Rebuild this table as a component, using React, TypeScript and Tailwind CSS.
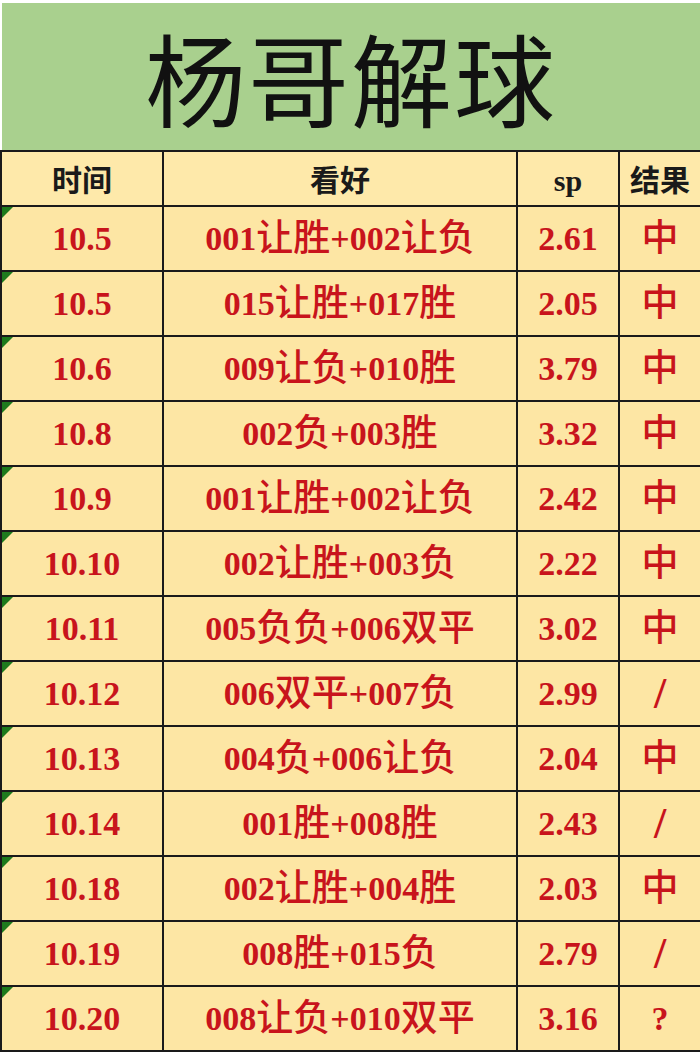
const rows = [
  ["10.5", "001让胜+002让负", "2.61", "中"],
  ["10.5", "015让胜+017胜", "2.05", "中"],
  ["10.6", "009让负+010胜", "3.79", "中"],
  ["10.8", "002负+003胜", "3.32", "中"],
  ["10.9", "001让胜+002让负", "2.42", "中"],
  ["10.10", "002让胜+003负", "2.22", "中"],
  ["10.11", "005负负+006双平", "3.02", "中"],
  ["10.12", "006双平+007负", "2.99", "/"],
  ["10.13", "004负+006让负", "2.04", "中"],
  ["10.14", "001胜+008胜", "2.43", "/"],
  ["10.18", "002让胜+004胜", "2.03", "中"],
  ["10.19", "008胜+015负", "2.79", "/"],
  ["10.20", "008让负+010双平", "3.16", "?"],
];

const serif = "font-['Liberation_Serif','Noto_Sans_CJK_SC',serif]";

// split text so the Chinese runs can be sized a bit larger than the digits
function Mixed({ text }: { text: string }) {
  if (text === "/")
    return (
      <span className="font-['Liberation_Serif',serif] text-[44px] font-bold">
        /
      </span>
    );
  const parts = text.match(/[\u4e00-\u9fff]+|[^\u4e00-\u9fff]+/g) || [];
  return (
    <>
      {parts.map((p, i) =>
        /[\u4e00-\u9fff]/.test(p) ? (
          <span key={i} className="text-[37px] font-medium">
            {p}
          </span>
        ) : (
          <span key={i}>{p}</span>
        )
      )}
    </>
  );
}

export default function App() {
  return (
    <div className="w-[700px] h-[1053px] overflow-hidden bg-white">
      <div className="ml-[2px] mt-[3px] h-[147px] bg-[#a9d08e] flex items-center justify-center">
        <h1 className="font-['Noto_Sans_CJK_SC',sans-serif] text-[101px] leading-none text-[#111] tracking-[2px]">
          杨哥解球
        </h1>
      </div>
      <div className="grid grid-cols-[162px_354px_102px_82px] border-t-2 border-l-2 border-[#1a1a1a]">
        {["时间", "看好", "sp", "结果"].map((h) => (
          <div
            key={h}
            className={`h-[55px] pt-[4px] border-r-2 border-b-2 border-[#1a1a1a] bg-[#fee9aa] flex items-center justify-center text-[30px] font-bold text-[#1a1a1a] ${serif}`}
          >
            {h}
          </div>
        ))}
        {rows.map((r, i) =>
          r.map((c, j) => (
            <div
              key={`${i}-${j}`}
              className={`relative h-[65px] border-r-2 border-b-2 border-[#1a1a1a] bg-[#fde6a4] flex items-center justify-center text-[34px] font-bold leading-none text-[#c8141c] ${serif}`}
            >
              {j === 0 && (
                <span className="absolute left-0 top-0 w-0 h-0 border-t-[11px] border-r-[11px] border-t-[#1d7a1d] border-r-transparent" />
              )}
              <Mixed text={c} />
            </div>
          ))
        )}
      </div>
    </div>
  );
}
